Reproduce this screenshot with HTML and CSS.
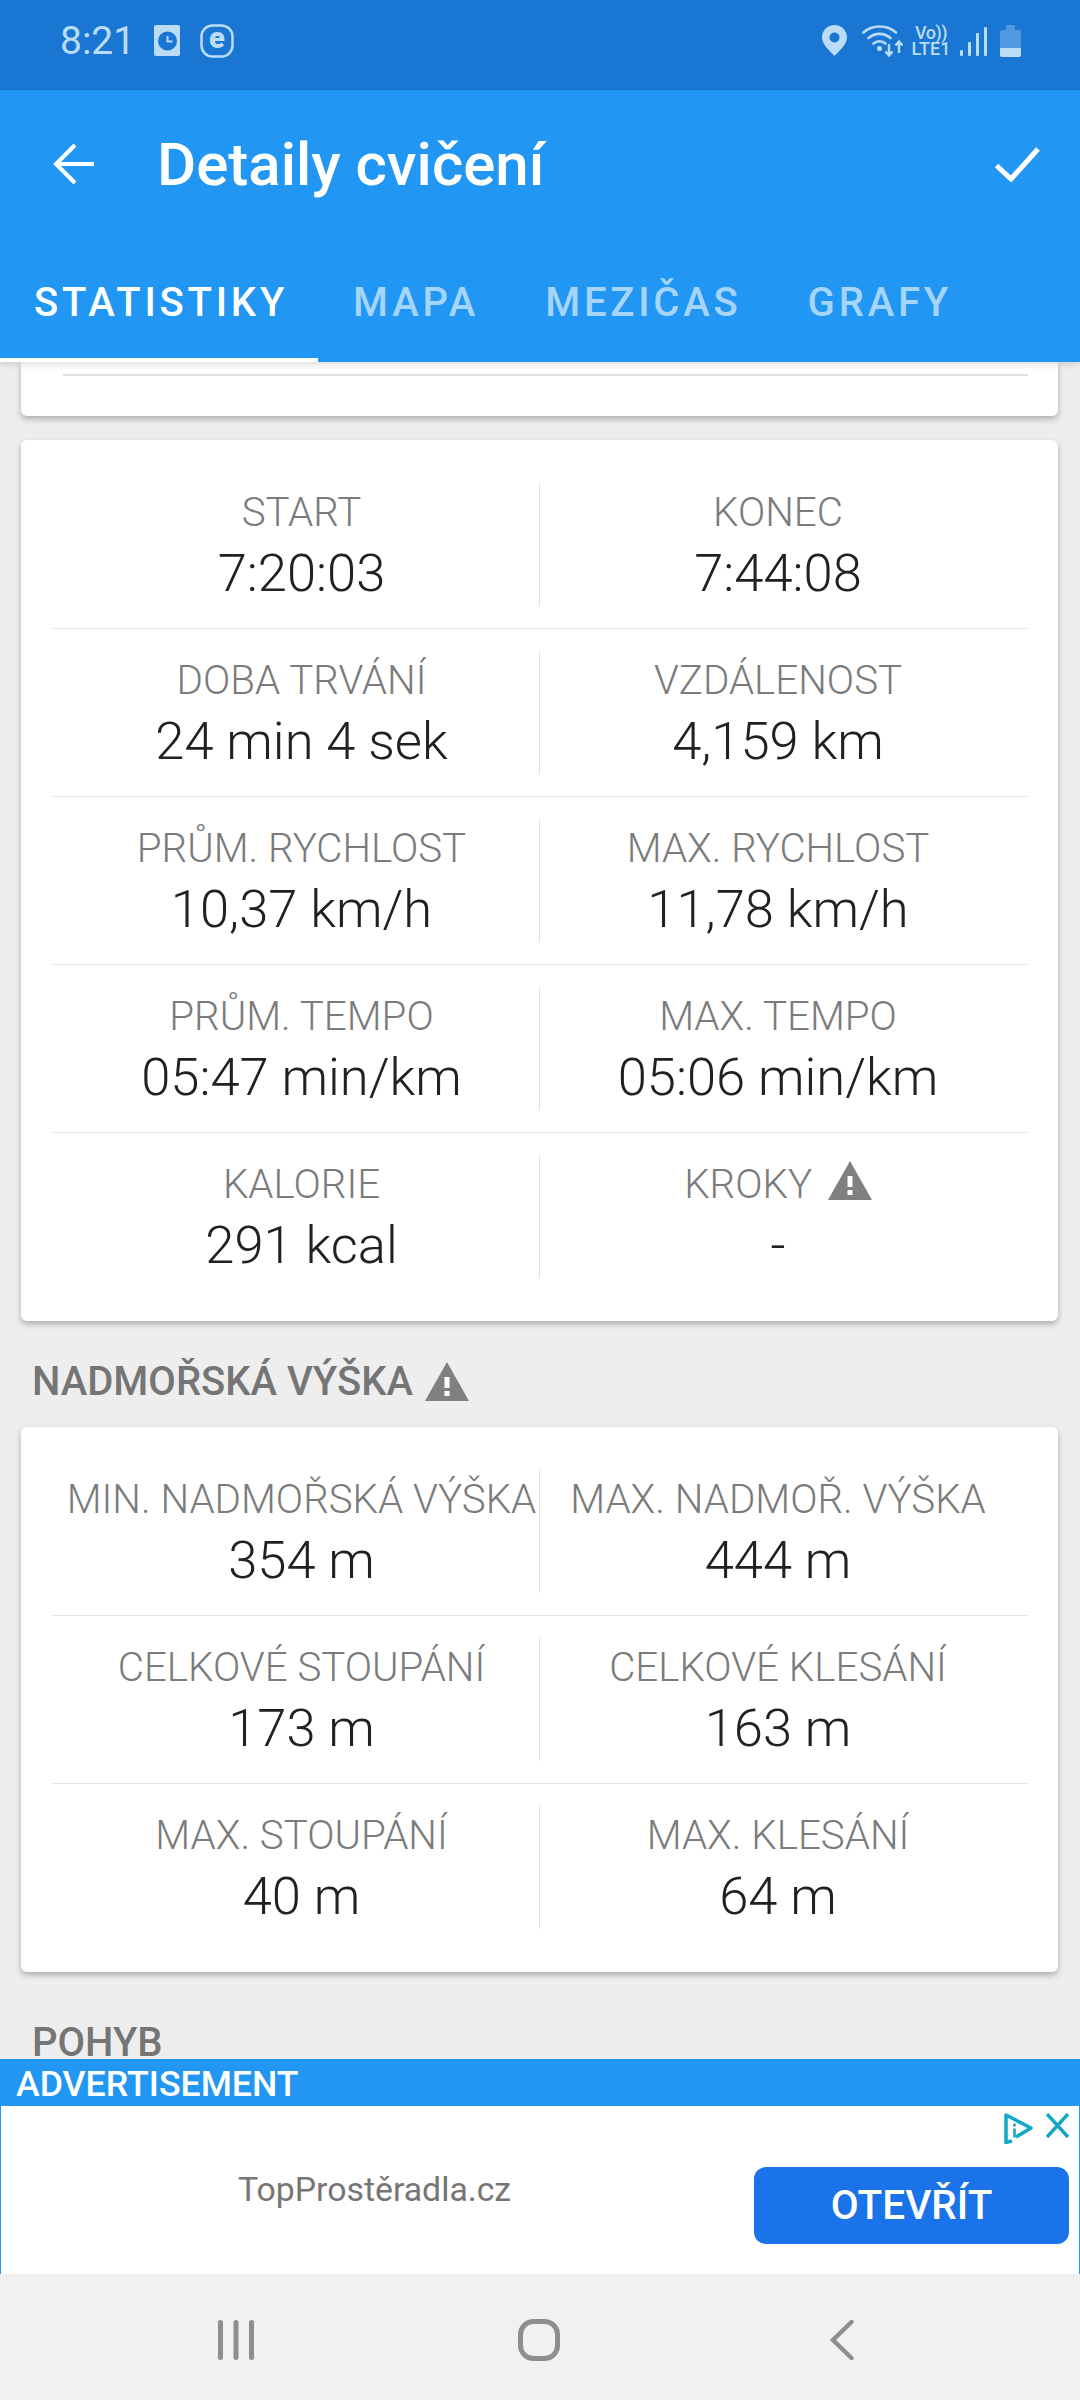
FILE: index.html
```html
<!DOCTYPE html>
<html lang="cs">
<head>
    <meta charset="UTF-8">
    <meta name="viewport" content="width=device-width, initial-scale=1.0">
    <title>Detaily cvičení</title>
    <link rel="stylesheet" href="styles.css">
</head>
<body>
    <svg class="defs" width="0" height="0">
        <symbol id="warn" viewBox="0 0 44 39">
            <path d="M22 0 L44 39 H0 Z" fill="#808080"/>
            <rect x="19.500" y="15" width="5" height="11" fill="#fff"/>
            <rect x="19.500" y="29" width="5" height="5" fill="#fff"/>
        </symbol>
    </svg>

    <div class="status-bar">
        <div class="status-left">
            <span class="status-time">8:21</span>
            <svg class="ico-clock" width="26" height="31" viewBox="0 0 26 31">
                <rect width="26" height="31" rx="2" fill="#bbdcf7"/>
                <circle cx="13.500" cy="16" r="9.500" fill="#1976d2"/>
                <path d="M13.500 11v5.500h5" fill="none" stroke="#bbdcf7" stroke-width="2"/>
            </svg>
            <svg class="ico-e" width="34" height="34" viewBox="0 0 34 34">
                <rect x="1.500" y="1.500" width="31" height="31" rx="11" fill="none" stroke="#bbdcf7" stroke-width="2.500"/>
                <text x="17" y="24" text-anchor="middle" class="ico-e-text">e</text>
            </svg>
        </div>
        <div class="status-right">
            <svg width="25" height="31" viewBox="0 0 25 31">
                <path fill-rule="evenodd" fill="#bbdcf7" d="M12.500 0C5.600 0 0 5.500 0 12.300 0 20 8 26 12.500 31 17 26 25 20 25 12.300 25 5.500 19.400 0 12.500 0Zm0 7.500a5 5 0 1 1 0 10 5 5 0 0 1 0-10Z"/>
            </svg>
            <svg class="ico-wifi" width="41" height="33" viewBox="0 0 41 33">
                <g fill="none" stroke="#bbdcf7" stroke-width="2.600" stroke-linecap="round">
                    <path d="M1.500 8.500C10 .5 25 .5 34 8.500"/>
                    <path d="M6.500 14C13 8.500 22 8.500 28.500 14"/>
                    <path d="M11.500 19.500C15 16.500 20 16.500 23.500 19.500"/>
                </g>
                <circle cx="17.500" cy="24.500" r="2.500" fill="#bbdcf7"/>
                <path d="M27 20v11M23.500 27.500l3.500 4 3.500-4M37 29V18M33.500 21.500l3.500-4 3.500 4" fill="none" stroke="#bbdcf7" stroke-width="2.400"/>
            </svg>
            <div class="volte">
                <span class="volte-line volte-top">Vo))</span>
                <span class="volte-line">LTE1</span>
            </div>
            <div class="signal">
                <span class="bar bar-1"></span>
                <span class="bar bar-2"></span>
                <span class="bar bar-3"></span>
                <span class="bar bar-4"></span>
            </div>
            <div class="battery">
                <span class="battery-cap"></span>
                <span class="battery-body"><span class="battery-level"></span></span>
            </div>
        </div>
    </div>

    <header class="app-bar">
        <div class="toolbar">
            <svg class="ico-back" width="42" height="42" viewBox="0 0 42 42">
                <path d="M41 21H3M22 2 3 21l19 19" fill="none" stroke="#fff" stroke-width="4"/>
            </svg>
            <h1 class="title">Detaily cvičení</h1>
            <svg class="ico-check" width="46" height="36" viewBox="0 0 46 36">
                <path d="M2.500 19.500 17 33 44 3" fill="none" stroke="#fff" stroke-width="5"/>
            </svg>
        </div>
        <nav class="tabs">
            <a class="tab tab-active">STATISTIKY</a>
            <a class="tab">MAPA</a>
            <a class="tab">MEZIČAS</a>
            <a class="tab">GRAFY</a>
        </nav>
    </header>

    <main class="content">
        <div class="card card-stub"><div class="stub-line"></div></div>

        <section class="card stats stats-first">
            <div class="stat-row">
                <div class="stat"><div class="stat-label">START</div><div class="stat-value">7:20:03</div></div>
                <div class="stat"><div class="stat-label">KONEC</div><div class="stat-value">7:44:08</div></div>
            </div>
            <div class="stat-row">
                <div class="stat"><div class="stat-label">DOBA TRVÁNÍ</div><div class="stat-value">24 min 4 sek</div></div>
                <div class="stat"><div class="stat-label">VZDÁLENOST</div><div class="stat-value">4,159 km</div></div>
            </div>
            <div class="stat-row">
                <div class="stat"><div class="stat-label">PRŮM. RYCHLOST</div><div class="stat-value">10,37 km/h</div></div>
                <div class="stat"><div class="stat-label">MAX. RYCHLOST</div><div class="stat-value">11,78 km/h</div></div>
            </div>
            <div class="stat-row">
                <div class="stat"><div class="stat-label">PRŮM. TEMPO</div><div class="stat-value">05:47 min/km</div></div>
                <div class="stat"><div class="stat-label">MAX. TEMPO</div><div class="stat-value">05:06 min/km</div></div>
            </div>
            <div class="stat-row">
                <div class="stat"><div class="stat-label">KALORIE</div><div class="stat-value">291 kcal</div></div>
                <div class="stat">
                    <div class="stat-label">KROKY <svg class="ico-warn" width="44" height="39"><use href="#warn"/></svg></div>
                    <div class="stat-value">-</div>
                </div>
            </div>
        </section>

        <h2 class="section-title">NADMOŘSKÁ VÝŠKA<svg class="ico-warn ico-warn-title" width="44" height="39"><use href="#warn"/></svg></h2>

        <section class="card stats">
            <div class="stat-row">
                <div class="stat"><div class="stat-label">MIN. NADMOŘSKÁ VÝŠKA</div><div class="stat-value">354 m</div></div>
                <div class="stat"><div class="stat-label">MAX. NADMOŘ. VÝŠKA</div><div class="stat-value">444 m</div></div>
            </div>
            <div class="stat-row">
                <div class="stat"><div class="stat-label">CELKOVÉ STOUPÁNÍ</div><div class="stat-value">173 m</div></div>
                <div class="stat"><div class="stat-label">CELKOVÉ KLESÁNÍ</div><div class="stat-value">163 m</div></div>
            </div>
            <div class="stat-row">
                <div class="stat"><div class="stat-label">MAX. STOUPÁNÍ</div><div class="stat-value">40 m</div></div>
                <div class="stat"><div class="stat-label">MAX. KLESÁNÍ</div><div class="stat-value">64 m</div></div>
            </div>
        </section>

        <h2 class="section-pohyb">POHYB</h2>
    </main>

    <div class="ad-header">ADVERTISEMENT</div>
    <div class="ad">
        <div class="ad-icons">
            <svg width="30" height="31" viewBox="0 0 30 31">
                <path d="M9 28 3 29.500V2L28 15 13 24" fill="none" stroke="#10a8c4" stroke-width="3.500" stroke-linejoin="round"/>
                <path d="M11.500 10.500v3M11.500 15.500v9" stroke="#10a8c4" stroke-width="2.500"/>
            </svg>
            <svg width="23" height="25" viewBox="0 0 23 25">
                <path d="M1 1 22 24M22 1 1 24" stroke="#10a8c4" stroke-width="3.500"/>
            </svg>
        </div>
        <div class="ad-name">TopProstěradla.cz</div>
        <div class="ad-button">OTEVŘÍT</div>
    </div>

    <div class="nav-bar">
        <svg width="36" height="40" viewBox="0 0 36 40">
            <path d="M2.500 2.500v35M18 2.500v35M33.500 2.500v35" stroke="#8e8e8e" stroke-width="5" stroke-linecap="round"/>
        </svg>
        <svg class="nav-home" width="42" height="42" viewBox="0 0 42 42">
            <rect x="2.500" y="2.500" width="37" height="37" rx="13" fill="none" stroke="#8e8e8e" stroke-width="5"/>
        </svg>
        <svg class="nav-back" width="24" height="40" viewBox="0 0 24 40">
            <path d="M21.500 2 3 20l18.500 18" fill="none" stroke="#8e8e8e" stroke-width="4.500" stroke-linecap="round"/>
        </svg>
    </div>
</body>
</html>
```

FILE: styles.css
```css
* { box-sizing: border-box; }
html, body { margin: 0; padding: 0; }
body {
    width: 1080px;
    height: 2400px;
    display: flex;
    flex-direction: column;
    overflow: hidden;
    background-color: #eeeeee;
    font-family: Roboto, "Liberation Sans", sans-serif;
}
.defs { position: absolute; }

/* status bar */
.status-bar {
    height: 90px;
    flex: none;
    display: flex;
    justify-content: space-between;
    align-items: center;
    padding: 0 59px 9px 60px;
    background-color: #1976d2;
    color: #bbdcf7;
}
.status-left { display: flex; align-items: center; }
.status-time { font-size: 39px; width: 94px; line-height: 1; margin-top: 2px; }
.ico-e { margin-left: 20px; overflow: visible; }
.ico-e-text { font-family: Roboto, sans-serif; font-size: 29px; font-weight: 900; fill: #bbdcf7; }
.status-right { display: flex; align-items: center; }
.ico-wifi { margin-left: 15px; }
.volte {
    width: 38px;
    margin: 0 10px 0 9px;
    display: flex;
    flex-direction: column;
    align-items: center;
    font-weight: 500;
    white-space: nowrap;
}
.volte-line { font-size: 18px; line-height: 16px; }
.volte-top { letter-spacing: -0.5px; }
.signal { display: flex; align-items: flex-end; gap: 5px; height: 30px; }
.bar { width: 3px; background-color: #bbdcf7; border-radius: 1px; }
.bar-1 { height: 6px; }
.bar-2 { height: 14px; }
.bar-3 { height: 23px; }
.bar-4 { height: 29px; }
.battery { margin-left: 13px; width: 21px; display: flex; flex-direction: column; align-items: center; }
.battery-cap { width: 9px; height: 5px; background-color: rgba(187, 220, 247, 0.35); }
.battery-body { width: 21px; height: 27px; display: flex; align-items: flex-end; border-radius: 2px; background-color: rgba(187, 220, 247, 0.35); }
.battery-level { width: 100%; height: 9px; border-radius: 0 0 2px 2px; background-color: #bbdcf7; }

/* app bar + tabs */
.app-bar {
    height: 272px;
    flex: none;
    position: relative;
    z-index: 2;
    background-color: #2196f3;
    color: #fff;
    box-shadow: 0 3px 6px rgba(0, 0, 0, 0.12);
}
.toolbar { height: 164px; display: flex; align-items: flex-start; padding: 0 0 0 53px; }
.ico-back { margin-top: 53px; }
.title { margin: 39px 0 0 62px; font-size: 60px; line-height: 72px; font-weight: 500; flex: 1; }
.ico-check { margin: 56px 40px 0 0; }
.tabs { display: flex; height: 108px; }
.tab {
    height: 108px;
    padding: 0 31px 0 35px;
    font-size: 40px;
    font-weight: 500;
    letter-spacing: 3.8px;
    line-height: 98px;
    color: #a6d5fb;
}
.tab-active { width: 318px; padding: 0 0 0 34px; color: #fff; border-bottom: 4px solid #fff; }

/* scrolled content */
.content { flex: 1; min-height: 0; }
.card {
    margin: 0 22px 0 21px;
    border-radius: 6px;
    background-color: #fff;
    box-shadow: 0 3px 6px rgba(0, 0, 0, 0.28);
}
.card-stub { height: 54px; padding: 12px 30px 0 42px; border-radius: 0 0 6px 6px; }
.stub-line { height: 2px; background-color: #e0e0e0; }
.stats { padding: 43px 31px 43px 32px; }
.stats-first { margin-top: 24px; }
.stat-row {
    display: grid;
    grid-template-columns: 1fr 1fr;
    padding: 0 13px 0 11px;
    margin-bottom: 22px;
    padding-bottom: 22px;
    border-bottom: 1px solid #e0e0e0;
}
.stat-row:last-child { margin-bottom: 0; padding-bottom: 0; border-bottom: none; }
.stat {
    height: 123px;
    display: flex;
    flex-direction: column;
    align-items: center;
    text-align: center;
    white-space: nowrap;
}
.stat + .stat { border-left: 1px solid #e0e0e0; padding-left: 2px; }
.stat-label {
    height: 59px;
    font-size: 40.3px;
    font-weight: 300;
    line-height: 59px;
    color: #7b7b7b;
}
.stat-value { font-size: 52.5px; font-weight: 300; line-height: 63px; color: #212121; }
.ico-warn { vertical-align: -2px; margin-left: 6px; }
.ico-warn-title { margin-left: 12px; }

.section-title {
    display: flex;
    align-items: center;
    height: 106px;
    margin: 0;
    padding: 14px 0 0 32px;
    font-size: 40px;
    font-weight: 500;
    color: #757575;
}
.section-pohyb {
    height: 87px;
    margin: 0;
    padding: 54px 0 0 32px;
    font-size: 40px;
    font-weight: 500;
    line-height: 33px;
    color: #757575;
}

/* ad */
.ad-header {
    height: 47px;
    flex: none;
    padding-left: 16px;
    background-color: #2196f3;
    color: #fff;
    font-size: 35.7px;
    font-weight: 500;
    line-height: 50px;
}
.ad {
    height: 168px;
    flex: none;
    position: relative;
    display: flex;
    align-items: center;
    padding: 0 10px 0 1px;
    background-color: #fff;
    border-left: 1px solid #2196f3;
    border-right: 1px solid #2196f3;
}
.ad-icons { position: absolute; top: 7px; right: 10px; display: flex; gap: 13px; }
.ad-name { flex: 1; padding: 0 0 2px 236px; font-size: 33.8px; color: #757575; }
.ad-button {
    width: 315px;
    height: 77px;
    margin-top: 31px;
    border-radius: 12px;
    background-color: #1a73e8;
    color: #fff;
    font-size: 40.5px;
    font-weight: 500;
    line-height: 77px;
    text-align: center;
}

/* nav bar */
.nav-bar {
    height: 126px;
    flex: none;
    display: flex;
    align-items: center;
    padding: 6px 0 0 218px;
    background-color: #f1f1f1;
}
.nav-home { margin-left: 264px; }
.nav-back { margin-left: 270px; }
```
